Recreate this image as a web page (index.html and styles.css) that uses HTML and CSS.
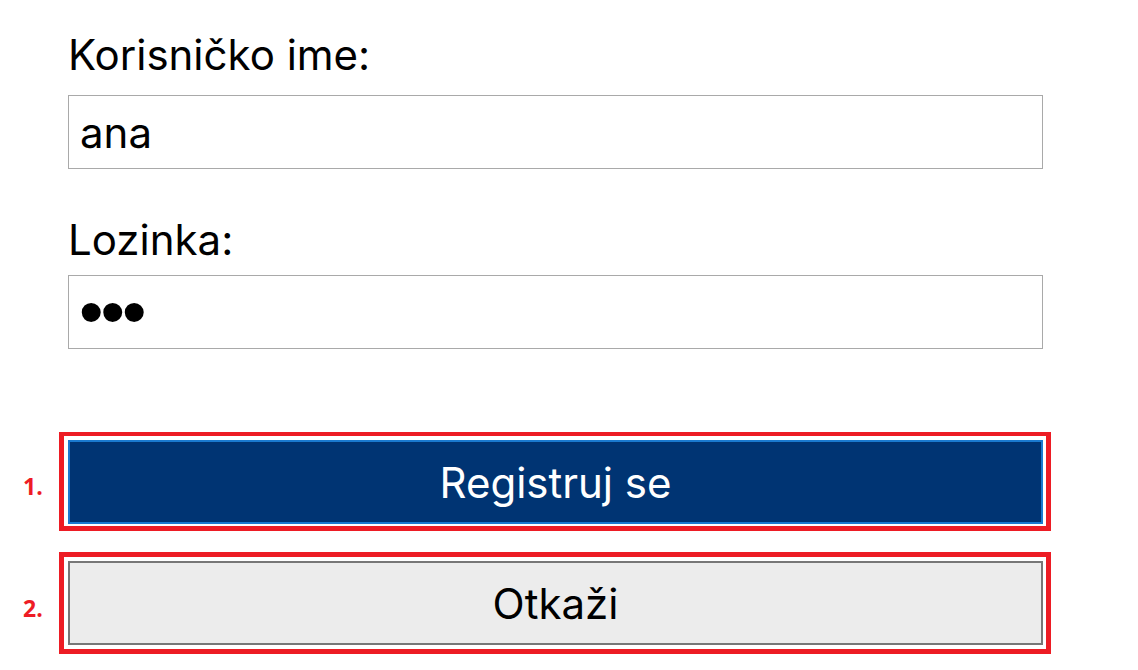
FILE: index.html
```html
<!DOCTYPE html>
<html lang="hr">
<head>
<meta charset="utf-8">
<title>Registracija</title>
<link rel="stylesheet" href="styles.css">
</head>
<body>
<form class="form">
  <label class="label label-first" for="user">Korisničko ime:</label>
  <input class="field" id="user" type="text" value="ana">
  <label class="label label-second" for="pass">Lozinka:</label>
  <input class="field field-pass" id="pass" type="password" value="ana">
  <div class="actions">
    <div class="mark-row">
      <span class="mark-num">1.</span>
      <div class="mark-box mark-box-1">
        <button class="btn btn-primary" type="submit">Registruj se</button>
      </div>
    </div>
    <div class="mark-row mark-row-2">
      <span class="mark-num">2.</span>
      <div class="mark-box mark-box-2">
        <button class="btn btn-secondary" type="button">Otkaži</button>
      </div>
    </div>
  </div>
</form>
</body>
</html>
```
FILE: styles.css
```css
html, body {
  margin: 0;
  padding: 0;
  background: #ffffff;
}
body {
  font-family: Inter, "Noto Sans", sans-serif;
  color: #000000;
}
.form {
  display: flex;
  flex-direction: column;
  align-items: flex-start;
  padding: 29px 0 0 68px;
}
.label {
  font-size: 42px;
  line-height: 52px;
}
.label-first {
  margin-bottom: 14px;
}
.label-second {
  margin-top: 45px;
  margin-bottom: 9px;
}
.field {
  box-sizing: border-box;
  width: 975px;
  height: 74px;
  border: 1px solid #a9a9a9;
  padding: 0 11px;
  font-family: Inter, "Noto Sans", sans-serif;
  font-size: 42px;
  color: #000;
  outline: none;
  margin: 0;
}
.field-pass {
  font-family: "Liberation Sans", Arial, sans-serif;
  font-size: 70px;
  letter-spacing: -3px;
  padding-left: 10px;
}
.actions {
  display: flex;
  flex-direction: column;
  margin-left: -45px;
  margin-top: 83px;
}
.mark-row {
  display: flex;
  align-items: center;
}
.mark-row-2 {
  margin-top: 21px;
}
.mark-num {
  flex: none;
  width: 36px;
  padding-top: 9px;
  color: #ee1c25;
  font-family: "Open Sans", "Liberation Sans", sans-serif;
  font-weight: bold;
  font-size: 23px;
}
.mark-box {
  flex: none;
  border: 5px solid #ed1c24;
  padding: 4px 3px 2px 4px;
  background: #fff;
  display: flex;
}
.mark-box-1 {
  border-top-width: 4px;
}
.mark-box-2 {
  padding: 4px 3px 4px 4px;
}
.btn {
  box-sizing: border-box;
  width: 975px;
  height: 84px;
  margin: 0;
  font-family: Inter, "Noto Sans", sans-serif;
  font-size: 42px;
  cursor: pointer;
}
.btn-primary {
  background: #003473;
  color: #ffffff;
  border: 2px solid #1a7ad0;
}
.btn-secondary {
  background: #ececec;
  color: #000000;
  border: 2px solid #777777;
}
```
